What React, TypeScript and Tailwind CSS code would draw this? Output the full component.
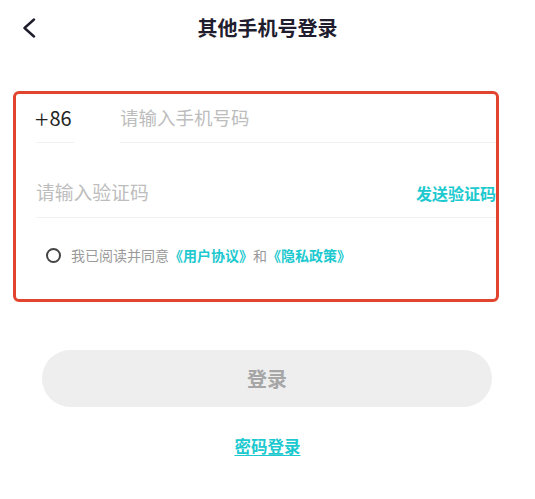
const font = { fontFamily: '"Noto Sans CJK SC", "Noto Sans", sans-serif' };

const BackIcon = () => (
  <svg width="14" height="20" viewBox="0 0 14 20" fill="none">
    <path d="M12 1.5 L2.5 10 L12 18.5" stroke="#1f1d2b" strokeWidth="2.4" strokeLinecap="round" strokeLinejoin="round" />
  </svg>
);

export default function App() {
  return (
    <div className="w-[535px] h-[499px] bg-white overflow-hidden" style={font}>
      {/* Header */}
      <div className="relative h-[56px] flex items-center justify-center">
        <button className="absolute left-[22px] top-[18px]">
          <BackIcon />
        </button>
        <h1 className="text-[20px] leading-[24px] font-bold text-[#1f1d2e]">其他手机号登录</h1>
      </div>

      {/* Form box */}
      <div className="ml-[13px] mt-[35px] w-[486px] h-[211px] border-[3px] border-[#e2452f] rounded-[6px] pl-[20px]">
        <div className="h-[49px] flex">
          <div className="w-[38px] flex items-center border-b border-[#f1f1f1] text-[#222]">
            <span className="text-[25px] leading-[24px] font-light -ml-[1px]">+</span>
            <span className="text-[20px] ml-[1px]">86</span>
          </div>
          <div className="flex-1 ml-[46px] flex items-center border-b border-[#f1f1f1] text-[18.5px] text-[#bdbdbd]">
            请输入手机号码
          </div>
        </div>

        <div className="mt-[25px] h-[50px] flex items-center justify-between border-b border-[#f1f1f1]">
          <span className="text-[18.8px] text-[#bdbdbd]">请输入验证码</span>
          <span className="text-[16px] font-bold text-[#1cc9cf] whitespace-nowrap">发送验证码</span>
        </div>

        <div className="mt-[27px] h-[20px] flex items-center">
          <span className="ml-[10px] w-[15px] h-[15px] rounded-full border-[2.5px] border-[#444]" />
          <span className="ml-[10px] text-[14px] text-[#9a9a9a] whitespace-nowrap">
            我已阅读并同意
            <span className="font-bold text-[#1cc9cf]">《用户协议》</span>
            和
            <span className="font-bold text-[#1cc9cf]">《隐私政策》</span>
          </span>
        </div>
      </div>

      {/* Login button */}
      <div className="mt-[48px] ml-[42px] w-[450px] h-[57px] rounded-full bg-[#eeeeee] flex items-center justify-center">
        <span className="text-[20px] font-bold text-[#a6a6a6]">登录</span>
      </div>

      <div className="mt-[27px] flex justify-center">
        <a className="text-[16.5px] leading-[24px] font-bold text-[#1cc9cf] underline underline-offset-2">密码登录</a>
      </div>
    </div>
  );
}
